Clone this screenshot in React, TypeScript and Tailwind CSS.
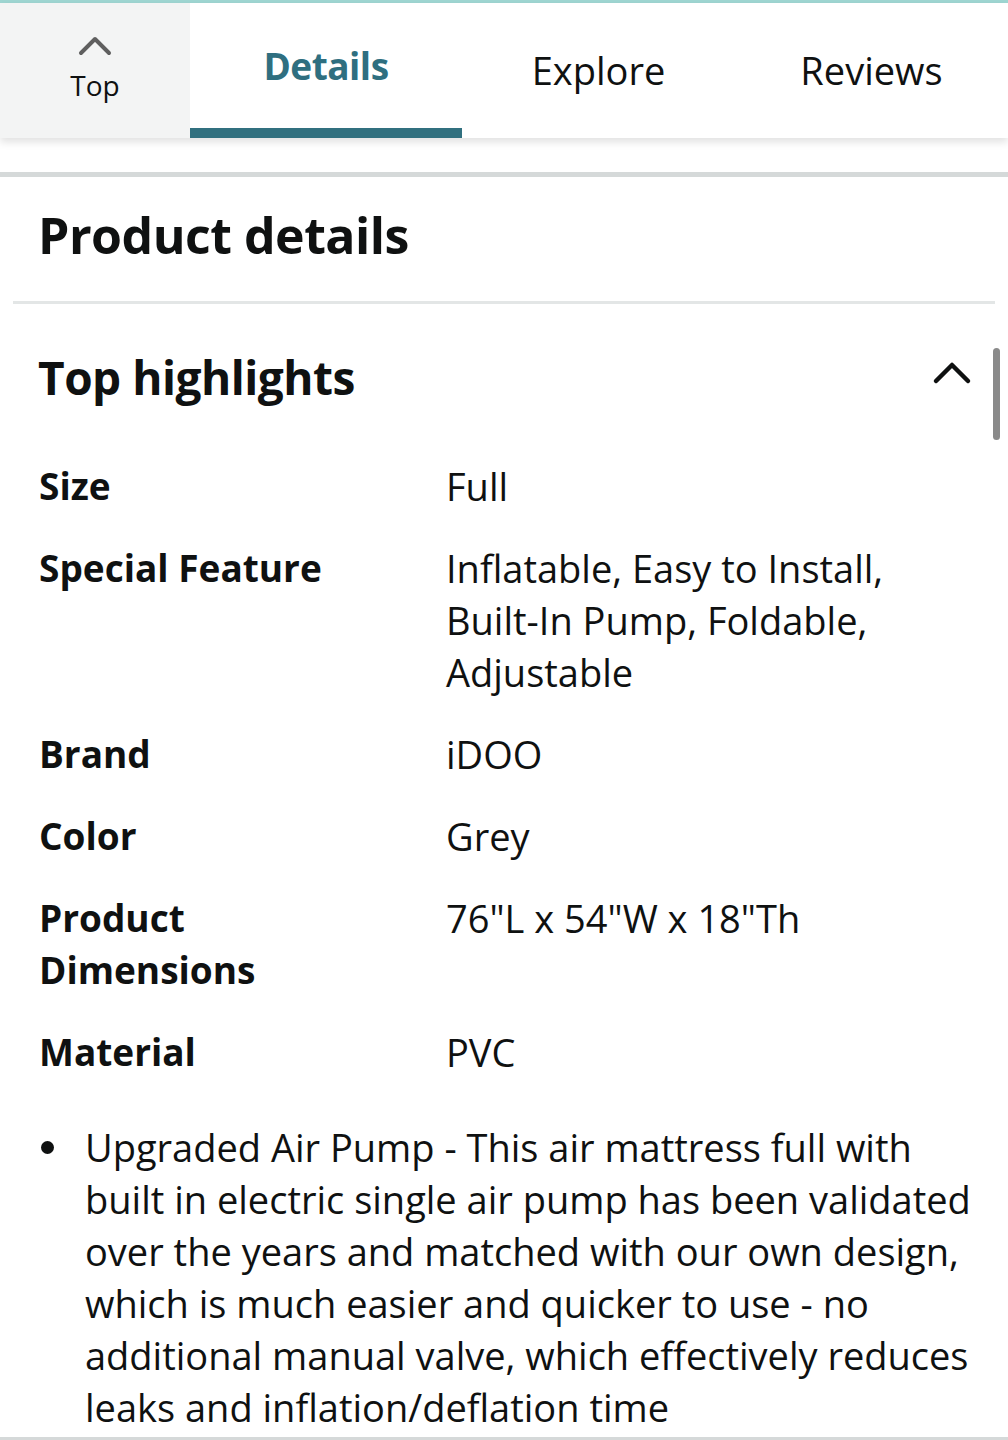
const ROWS: { label: string; value: string }[] = [
  { label: "Size", value: "Full" },
  { label: "Special Feature", value: "Inflatable, Easy to Install, Built-In Pump, Foldable, Adjustable" },
  { label: "Brand", value: "iDOO" },
  { label: "Color", value: "Grey" },
  { label: "Product Dimensions", value: "76\"L x 54\"W x 18\"Th" },
  { label: "Material", value: "PVC" },
];

const BULLETS = [
  "Upgraded Air Pump - This air mattress full with built in electric single air pump has been validated over the years and matched with our own design, which is much easier and quicker to use - no additional manual valve, which effectively reduces leaks and inflation/deflation time",
];

export default function App() {
  return (
    <div className="relative w-[1008px] h-[1440px] overflow-hidden bg-white text-[#0f1111] font-['Open_Sans',sans-serif]">
      <div className="h-[3px] bg-[#9fd6d2]" />

      {/* tab bar */}
      <div className="flex h-[135px] shadow-[0_4px_8px_rgba(0,0,0,0.12)]">
        <div className="w-[190px] bg-[#f3f4f4] flex flex-col items-center pt-[31px]">
          <svg width="36" height="22" viewBox="0 0 36 22">
            <path d="M4 19 L18 5 L32 19" fill="none" stroke="#5f5f5f" strokeWidth="4" strokeLinecap="round" strokeLinejoin="round" />
          </svg>
          <span className="text-[28px] leading-[34px] mt-[12px]">Top</span>
        </div>
        <div className="w-[272px] flex flex-col">
          <div className="flex-1 flex items-center justify-center pt-[1px]">
            <span className="text-[37px] font-bold text-[#2f6f80] tracking-[-0.5px]">Details</span>
          </div>
          <div className="h-[10px] bg-[#31707f]" />
        </div>
        <div className="w-[273px] flex items-center justify-center">
          <span className="text-[38px]">Explore</span>
        </div>
        <div className="flex-1 flex items-center justify-center">
          <span className="text-[38px]">Reviews</span>
        </div>
      </div>

      <div className="h-[34px]" />
      <div className="h-[5px] bg-[#d5d9d9]" />

      <h1 className="pl-[38px] pr-[40px] pt-[28px] pb-[36px] text-[50px] leading-[60px] font-bold tracking-[-0.5px]">Product details</h1>
      <div className="mx-[13px] h-[3px] bg-[#e3e6e6]" />

      <div className="flex items-center justify-between pl-[38px] pr-[36px] pt-[45px] pb-[55px]">
        <h2 className="text-[46px] leading-[56px] font-bold tracking-[-0.5px]">Top highlights</h2>
        <svg width="40" height="26" viewBox="0 0 40 26" className="mb-[10px]">
          <path d="M4 22 L20 6 L36 22" fill="none" stroke="#0f1111" strokeWidth="4.5" strokeLinecap="round" strokeLinejoin="round" />
        </svg>
      </div>

      <div className="flex flex-col gap-[30px] pl-[39px] pr-[30px]">
        {ROWS.map((r) => (
          <div key={r.label} className="flex leading-[52px]">
            <div className="w-[407px] shrink-0 pr-[60px] text-[37px] font-bold">{r.label}</div>
            <div className="w-[500px] text-[38px]">{r.value}</div>
          </div>
        ))}
      </div>

      <ul className="mt-[43px] pl-[40px] pr-[28px]">
        {BULLETS.map((b) => (
          <li key={b} className="flex text-[38px] leading-[52px]">
            <span className="w-[45px] shrink-0 flex items-start pt-[20px]">
              <span className="block w-[13px] h-[13px] rounded-full bg-[#0f1111] ml-[1px]" />
            </span>
            <span>{b}</span>
          </li>
        ))}
      </ul>

      <div className="absolute left-0 right-0 bottom-0 h-[3px] bg-[#d5d9d9]" />
      {/* scrollbar */}
      <div className="absolute left-[993px] top-[348px] w-[7px] h-[92px] rounded-full bg-[#8a8a8a]" />
    </div>
  );
}
